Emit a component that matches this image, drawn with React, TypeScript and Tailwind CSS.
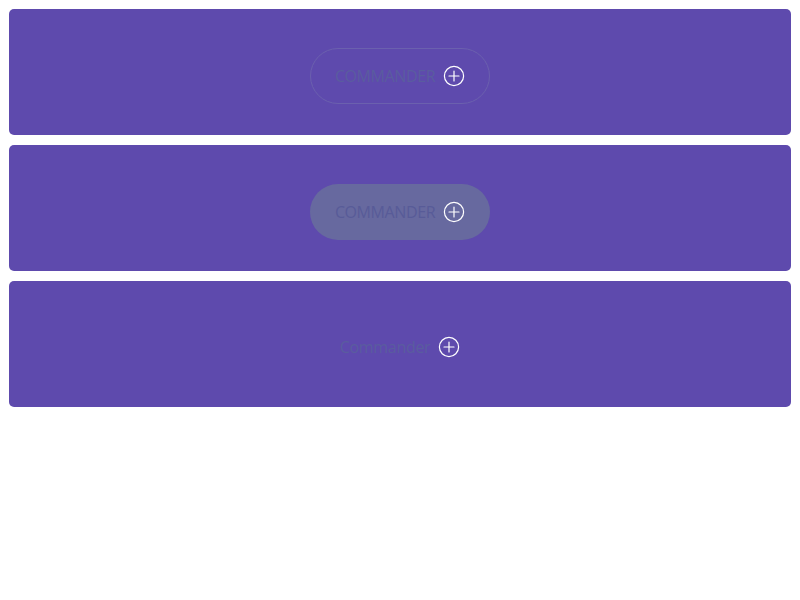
import React from "react";

const PlusCircle = () => (
  <svg width="22" height="22" viewBox="0 0 22 22" fill="none" stroke="white" strokeWidth="1.2" strokeLinecap="round">
    <circle cx="11" cy="11" r="9.6" />
    <line x1="11" y1="6" x2="11" y2="16" />
    <line x1="6" y1="11" x2="16" y2="11" />
  </svg>
);

export default function App() {
  return (
    <div className="flex flex-col gap-[10px] p-[9px] bg-white" style={{ fontFamily: '"Open Sans", "Noto Sans", sans-serif' }}>
      <div className="h-[126px] rounded-[5px] bg-[#5e4aad] flex justify-center pt-[39px]">
        <button className="w-[180px] h-[56px] rounded-full border border-[#6b60ae] flex items-center justify-center gap-[8px] text-[16px] tracking-[-0.4px] text-[#5a5c9f]">
          <span>COMMANDER</span>
          <PlusCircle />
        </button>
      </div>
      <div className="h-[126px] rounded-[5px] bg-[#5e4aad] flex justify-center pt-[39px]">
        <button className="w-[180px] h-[56px] rounded-full bg-[#67699f] flex items-center justify-center gap-[8px] text-[16px] tracking-[-0.4px] text-[#585b98]">
          <span>COMMANDER</span>
          <PlusCircle />
        </button>
      </div>
      <div className="h-[126px] rounded-[5px] bg-[#5e4aad] flex justify-center items-center pt-[6px]">
        <div className="flex items-center gap-[8px] text-[16px] tracking-[-0.3px] text-[#5a5c9f]">
          <span>Commander</span>
          <PlusCircle />
        </div>
      </div>
    </div>
  );
}
